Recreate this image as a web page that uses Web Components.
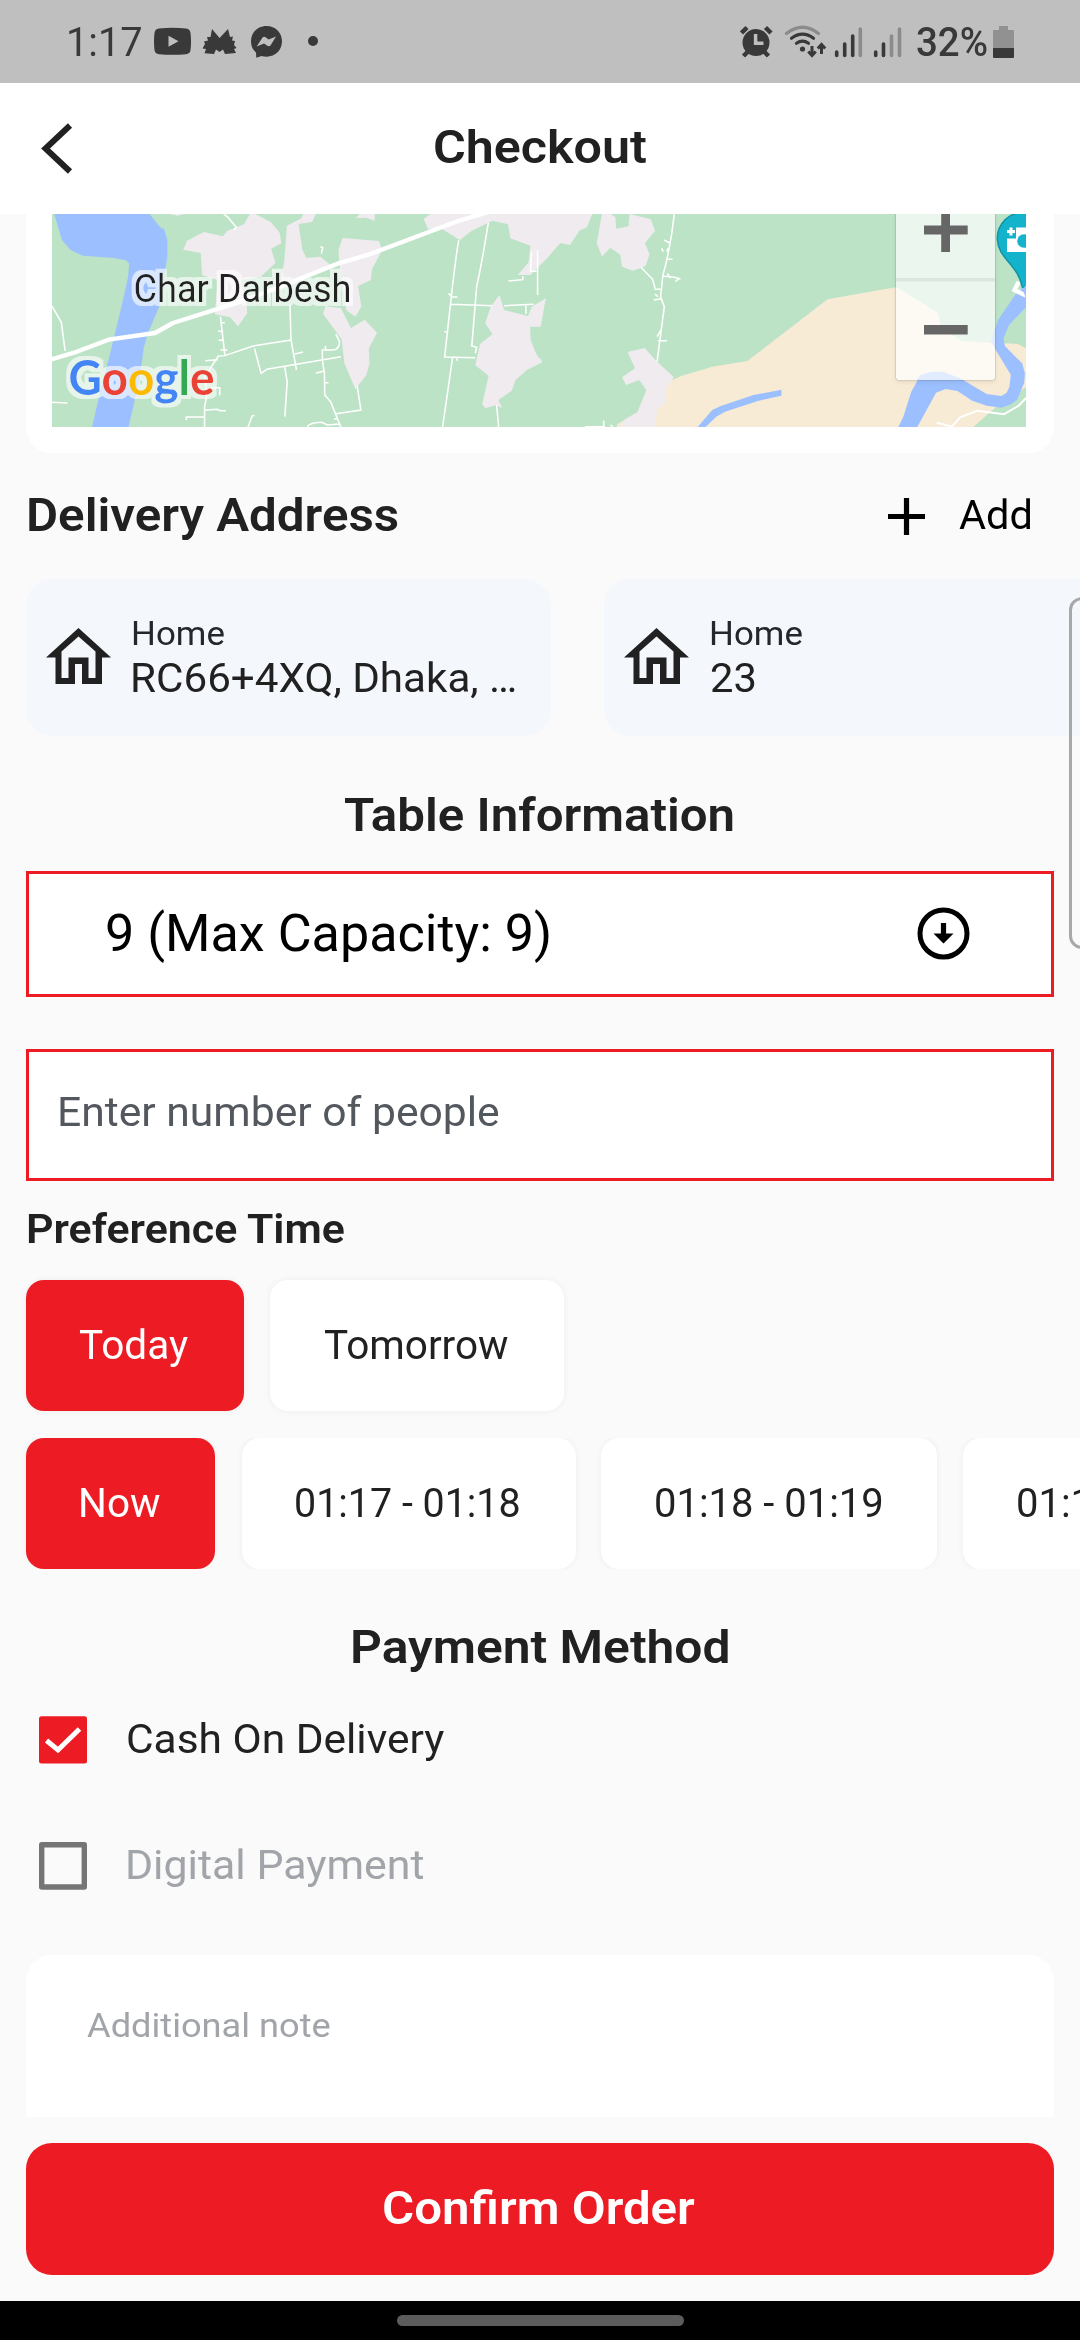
<!DOCTYPE html>
<html lang="en">
<head>
<meta charset="utf-8">
<title>Checkout</title>
<style>
html,body{margin:0;padding:0;background:#fafafa;overflow:hidden}
body{width:1080px;height:2340px;font-family:Roboto,"Liberation Sans",sans-serif;color:#212121}
</style>
</head>
<body>
<checkout-app></checkout-app>
<script>
const define = (name, html, setup) => {
  const t = document.createElement('template');
  t.innerHTML = html;
  customElements.define(name, class extends HTMLElement {
    connectedCallback() {
      if (this.shadowRoot) return;
      this.attachShadow({mode: 'open'}).appendChild(t.content.cloneNode(true));
      if (setup) setup(this, this.shadowRoot);
    }
  });
};

/* Single-line label whose ink fills exactly the width given in "w". */
const ctx = document.createElement('canvas').getContext('2d');
customElements.define('fit-label', class extends HTMLElement {
  connectedCallback() {
    if (this.shadowRoot) return;
    const size = this.getAttribute('size') || '40.5';
    const weight = this.getAttribute('weight') || '400';
    const root = this.attachShadow({mode: 'open'});
    const text = this.getAttribute('text');
    ctx.font = `${weight} ${size}px Roboto`;
    const m = ctx.measureText(text);
    const w = +this.getAttribute('w');
    const ink = m.actualBoundingBoxLeft + m.actualBoundingBoxRight;
    const k = w / ink;
    root.innerHTML = `<style>
      :host{display:block;flex:none;width:${w}px;height:${this.getAttribute('h') || 48}px;line-height:${this.getAttribute('h') || 48}px;white-space:pre;font-size:${size}px;font-weight:${weight}}
      span{display:inline-block;transform-origin:0 50%;transform:scaleX(${k});margin-left:${m.actualBoundingBoxLeft * k}px}
    </style><span></span>`;
    root.querySelector('span').textContent = text;
  }
});

define('status-bar', `<style>
  :host{display:flex;align-items:center;height:83px;background:#bfbfbf;color:#393939;box-sizing:border-box;padding:1px 66px 0 69px}
  svg{display:block;flex:none}
  .sp{flex:1}
</style>
<fit-label text="1:17" w="72" size="40.5"></fit-label>
<svg style="margin-left:13px" width="165" height="34" viewBox="154 25 165 34" fill="#393939">
  <path fill-rule="evenodd" d="M159 28.6Q172.500 27 186 28.600Q190 29 190.500 33Q191.600 41.500 190.500 50Q190 54 186 54.200Q172.500 55.500 159 54.200Q155 54 154.500 50Q153.500 41.500 154.500 33Q155 29 159 28.600ZM168.500 35.700V46.800L178.500 41.300Z"/>
  <path d="M212 29L219.600 38L228 29L230 37L233 36.600L232 40.500L235 41L234 45L236.600 48L234 49L236 53L225 54L223 49.500L219.600 52L216 49.500L214 54L204.500 53.300L206 49L202.500 48.500L205 44L204 41.500L208 40.500L207 37L210.500 37Z"/>
  <path fill-rule="evenodd" d="M266.500 26C257.500 26 251 32.600 251 41.300Q251 48.500 256 52.500L256.300 57.800L261.500 56Q264 56.700 266.500 56.700C275.600 56.700 282 50 282 41.300C282 32.600 275.600 26 266.500 26ZM256.700 46.500L262.500 37.500Q264 36 266 37.500L268.600 39.600L276 36.500L270.500 45.500Q269 47 267 45.600L264 43.500Z"/>
  <circle cx="313" cy="41" r="5"/>
</svg>
<span class="sp"></span>
<svg style="margin-right:11px" width="166" height="34" viewBox="740 25 166 34" fill="none" stroke="#393939">
  <circle cx="756" cy="42.500" r="13.500" fill="#393939" stroke="none"/>
  <path stroke-width="4.500" d="M741.500 33L747 27.500M771 33L765.500 27.500M743.500 56L748 51.500M768.500 56L764 51.500"/>
  <path stroke="#bfbfbf" stroke-width="3.500" d="M755.600 34V43.300H763.500"/>
  <g stroke-linecap="round" stroke-width="3.200">
    <path stroke="#8b8b8b" d="M786.500 33.500Q802.500 21 818.500 33.500"/>
    <path d="M791.500 38.200Q802.500 30 813.500 38.200M796.500 43.300Q802.500 39 808.500 43.300"/>
  </g>
  <circle cx="802.500" cy="49" r="2.600" fill="#393939" stroke="none"/>
  <path stroke-width="3" d="M812 46V55M808.300 51.500L812 55.500L815.700 51.500M821.500 54V45M817.800 48.500L821.500 44.500L825.200 48.500"/>
  <g stroke-width="3.600" stroke-linecap="round">
    <path d="M836.700 52V55.500M844.700 44V55.500M852.700 36V55.500M875.700 52V55.500M883.500 44V55.500"/>
    <path stroke="#8b8b8b" d="M860.300 29V55.500M891.500 36V55.500M899.500 29V55.500"/>
  </g>
</svg>
<fit-label text="32%" w="70" size="41" weight="500"></fit-label>
<svg style="margin-left:6px" width="21" height="34" viewBox="0 0 21 34"><path fill="#919191" d="M6 1H15V5H20Q21 5 21 6V24H0V6Q0 5 1 5H6Z"/><path fill="#393939" d="M0 23H21V32Q21 33 20 33H1Q0 33 0 32Z"/></svg>
`);

define('app-header', `<style>
  :host{display:flex;align-items:center;height:131px;background:#fff;box-sizing:border-box;padding-left:40px}
  svg{flex:none;margin-right:360px}
</style>
<svg width="34" height="56" viewBox="40 121 34 56"><path d="M70 125.500L45.500 148.500L70 171.500" fill="none" stroke="#212121" stroke-width="6"/></svg>
<slot></slot>`);

define('map-card', `<style>
  :host{display:block;height:239px;background:#fff;border-radius:0 0 26px 26px;box-sizing:border-box;padding:0 26px;margin:0 26px}
  svg{display:block}
</style>
<svg width="976" height="213" viewBox="52 214 976 213">
  <defs>
    <filter id="halo" x="-10%" y="-25%" width="120%" height="150%"><feMorphology in="SourceAlpha" operator="dilate" radius="3.500"/><feGaussianBlur stdDeviation=".7"/><feComponentTransfer result="a"><feFuncA type="linear" slope=".62"/></feComponentTransfer><feFlood flood-color="#fff"/><feComposite in2="a" operator="in" result="h"/><feMerge><feMergeNode in="h"/><feMergeNode in="SourceGraphic"/></feMerge></filter>
    <filter id="sh" x="-20%" y="-20%" width="140%" height="140%"><feDropShadow dx="0" dy="1.500" stdDeviation="2" flood-opacity=".4"/></filter>
    <clipPath id="mc"><path d="M52 214H1026V427H52Z"/></clipPath>
  </defs>
  <g clip-path="url(#mc)">
  <path fill="#bce3c6" d="M52 214H1026V427H52Z"/>
  <g transform="translate(0 200) scale(.34439 .33333)">
    <path fill="#9cc0ff" d="M157 40H433L465 82L477 88L486 120V170L462 320L430 400L418 440L405 540L373 682H267L290 580L320 460L355 310L372 230L375 190L365 181L330 174L240 167L205 150L180 120Z"/>
    <g fill="#efebef">
      <path d="M737 40L787 67L812 98L817 130L787 146L800 188L757 231L700 240L715 308L718 340L691 379L668 352L624 343L632 240L587 226L583 159L532 149L543 122L592 96L647 109L660 92L708 73L726 42Z"/>
      <path d="M880 42H917L906 66L867 72L878 150L890 174L930 170L958 193L880 240L815 250L826 180L833 77L875 55Z"/>
      <path d="M995 114L1100 123L1110 150L1080 208L1077 240L1040 258L1049 320L1032 350L1005 330L985 190L983 150Z"/>
      <path d="M945 318L990 325L1019 384L1059 359L1095 398L1071 445L1073 490L1064 525L1032 568L1000 490L992 418L938 342Z"/>
      <path d="M1033 54L1045 42H1088V62L1063 53Z"/>
      <path d="M1250 42H1720L1704 82L1682 92L1655 135L1627 129L1590 173L1540 225L1503 225L1535 187L1540 137L1482 115L1475 73L1430 62L1370 92L1335 120L1275 82L1243 88L1230 57Z"/>
      <path d="M1450 285L1464 330L1533 348L1544 320L1585 295L1570 380H1539L1541 420L1557 462L1574 487L1530 510L1497 540L1486 572L1447 600L1458 624L1441 615L1409 625L1400 612L1419 527L1380 496L1394 432L1430 403L1409 370L1425 320Z"/>
      <path d="M495 42H535L515 47Z"/>
    </g>
    <g fill="none" stroke="#fff" stroke-width="4.500">
      <path d="M650 42L662 52L686 82L680 90M151 318L178 367L189 453M151 607L196 609"/>
      <path d="M640 350L653 467L634 468L595 530L600 590L594 620V682M653 467L735 438L845 420L842 314M845 420L861 510M739 445L758 520L775 508L990 470M826 498L834 545L827 650M596 482L633 479M541 660V651H592M592 631L630 628L640 632H656M612 563H638V586M720 682L732 648L739 646"/>
      <path d="M642 368H653M633 394H648M635 421H648M640 450H660M856 462L880 456"/>
      <path d="M975 402L986 425Q985 450 965 450H936V480L942 520L943 585L960 605L990 682M917 520L940 513M945 548H954M975 641L1048 630L1037 558M892 680Q900 668 935 667L950 675L985 672M970 658L980 655M945 438V450"/>
      <path d="M1332 120Q1322 180 1308 313L1291 471L1380 473M1314 474L1285 682M1418 68Q1400 185 1384 260L1370 438L1384 442L1380 460M1308 313L1430 317M1464 317L1550 313M1302 280L1312 290L1328 291M1290 395H1302M1476 243L1518 239V229M1544 155L1540 214H1558M1561 150V285M1527 317V342M1442 615L1448 682M930 140L937 143L933 161M1325 474L1328 482"/>
    </g>
    <path fill="none" stroke="#fff" stroke-width="13" stroke-linejoin="round" d="M140 481L215 458L315 419L450 399L502 369L690 308L820 258L875 235L980 191L1070 164L1330 63L1420 36"/>
  </g>
  <g transform="translate(540 200) scale(.34439 .33333)">
    <path fill="#f7ebd6" d="M225 672L285 638L340 560L410 528L500 500L602 483L835 298L1040 260L1155 338L1165 385L1225 423L1388 432L1420 450V555L1320 625L1257 682H222Z"/>
    <g fill="#efebef">
      <path d="M180 40H203L219 52L221 86L257 79L260 42L322 58L334 92L305 130L318 163L307 198L270 212L238 200L233 164L204 143L180 170L165 130Z"/>
      <path d="M254 456L304 444L340 485L389 531L364 568L363 608L340 628L334 682H237L243 660L283 636L309 570L288 540L250 555L238 532L276 505Z"/>
      <path d="M0 312L17 295L2 350ZM0 472L6 485H0Z"/>
    </g>
    <g fill="#9cc0ff"><path d="M457 682L500 630L525 618L620 585L701 569V587L635 602L537 635L512 650L480 682Z"/>
    <path d="M1040 682L1055 650L1078 575L1105 525L1135 515H1170L1220 535L1297 582L1340 588L1355 578L1363 560L1367 524L1325 453L1310 425L1330 360L1383 280L1420 250V312L1362 375L1346 415L1350 438L1400 490L1408 520L1406 548L1385 600L1368 613L1340 623L1297 617L1255 602L1212 573L1178 567L1150 578L1095 682Z"/></g>
    <g fill="none" stroke="#fff" stroke-width="4.500">
      <path d="M390 42Q380 140 357 225L350 290L361 320L340 485M293 202L327 238L335 268H349M357 228L390 232L408 237M330 300L352 296M334 282L342 290M361 120L378 130M367 178H385M353 145L358 155M371 145L369 155M342 422H369M340 410L352 388M130 680H190M185 662V682M205 675L212 682M393 244L405 235M370 220L378 234"/>
      <path stroke-width="6" d="M1152 668L1196 680L1220 652L1270 632L1347 643L1390 617L1412 593"/>
      <path stroke-width="13" d="M1390 245L1378 270L1411 287"/>
    </g>
  </g>
  <text x="133.500" y="301.700" font-family="Roboto" font-size="38.500" textLength="218" lengthAdjust="spacingAndGlyphs" fill="#202124" filter="url(#halo)">Char Darbesh</text>
  <text x="68.500" y="395.300" font-family="Lato" font-weight="700" font-size="48" textLength="146" lengthAdjust="spacingAndGlyphs" filter="url(#halo)"><tspan fill="#4285f4">G</tspan><tspan fill="#ea4335">o</tspan><tspan fill="#fbbc04">o</tspan><tspan fill="#4285f4">g</tspan><tspan fill="#34a853">l</tspan><tspan fill="#ea4335">e</tspan></text>
  <g>
    <path fill="#000" opacity=".2" filter="url(#sh)" d="M895.500 210H995.500V377Q995.500 380.500 992 380.500H899Q895.500 380.500 895.500 377Z"/>
    <path fill="#bce3c6" d="M896 210H995V377Q995 380 992 380H899Q896 380 896 377Z"/>
    <g transform="translate(540 200) scale(.34439 .33333)"><path fill="#f7ebd6" d="M1034 261L1155 338L1165 385L1225 423L1321 429V533L1314 540H1041L1034 533Z"/><path fill="#9cc0ff" d="M1092 540L1105 525L1135 515H1170L1220 535L1230 540ZM1321 385L1310 425L1321 445Z"/></g>
    <path fill="#fff" opacity=".7" d="M896 210H995V377Q995 380 992 380H899Q896 380 896 377Z"/>
    <path fill="#dbe6de" d="M896 278H995V281.500H896Z"/>
    <path fill="#666" d="M924 225.500H941.200V210H950V225.500H967.700V234.500H950V252H941.200V234.500H924ZM924 325H967.700V334.500H924Z"/>
  </g>
  <path fill="#13b3cb" stroke="#1193a8" stroke-width="1.500" d="M1022.500 287.500C1018 264 998 259 997.300 239C997 224 1009 212 1025 212H1040V287Z"/>
  <path fill="#9cc0ff" d="M1022 289L1027 285V300Z"/>
  <path fill="#fff" d="M1016 227.500H1030V252H1007V238.500H1016ZM1009.500 227.500H1012.500V230H1015V233H1012.500V235.500H1009.500V233H1007V230H1009.500Z"/>
  <circle cx="1024" cy="241" r="6.800" fill="#13b3cb"/>
  </g>
</svg>`);

define('address-card', `<style>
  :host{display:flex;flex:none;width:525px;height:157px;border-radius:26px;background:#f4f7fc;box-sizing:border-box;padding:0 0 0 20px}
  svg{flex:none;margin:49px 22px 0 0}
  .t{padding-top:31px}
</style>
<svg width="65" height="57" viewBox="0 0 65 57" fill="#212121"><path fill-rule="evenodd" d="M32.500 0L65 29.500H56V56H36V36H29V56H9.500V29.500H0ZM32.500 8.500L15.500 23.500V50H22.500V29.500H42.500V50H49.500V23.500Z"/></svg>
<div class="t"><slot></slot></div>`);

define('slot-chip', `<style>
  :host{display:flex;flex:none;align-items:center;height:131px;box-sizing:border-box;border-radius:18px;background:#fff;box-shadow:0 0 6px rgba(0,0,0,.06);padding-bottom:2px}
  :host([selected]){background:#ed1c24;color:#fff}
</style><slot></slot>`, h => { h.style.width = h.getAttribute('w') + 'px'; h.style.paddingLeft = h.getAttribute('p') + 'px'; });

define('form-box', `<style>
  :host{display:flex;align-items:center;box-sizing:border-box;margin:0 26px;background:#fff;border:3px solid #ed1c24}
</style><slot></slot>`);

define('check-row', `<style>
  :host{display:flex;align-items:center;height:48px;padding-left:39px}
  svg{margin-right:41px;flex:none;display:block}
  .on{display:none}
  :host([checked]) .on{display:block}
  :host([checked]) .off{display:none}
</style>
<svg width="48" height="48" viewBox="0 0 48 48"><g class="on"><rect y=".3" width="48" height="47.200" rx="2.500" fill="#ed1c24"/><path d="M7.500 24.500L19 34L40.500 13" fill="none" stroke="#fff" stroke-width="5"/></g><rect class="off" x="2.700" y="2.700" width="42.600" height="42.300" fill="none" stroke="#757575" stroke-width="5.400" stroke-linejoin="round"/></svg>
<slot></slot>`);

define('note-box', `<style>
  :host{display:block;margin:0 26px;height:162px;background:#fff;border-radius:26px 26px 0 0;box-sizing:border-box;padding:47px 0 0 61px;color:#a1a4a9}
</style><slot></slot>`);

define('primary-button', `<style>
  :host{display:flex;justify-content:center;align-items:center;margin:0 26px;height:131.500px;border-radius:26px;background:#ed1c24;color:#fff;box-sizing:border-box;padding-bottom:1px}
</style><slot></slot>`);

define('nav-bar', `<style>
  :host{display:flex;justify-content:center;height:39px;background:#000;box-sizing:border-box;padding-top:14px}
  i{width:287px;height:11px;border-radius:6px;background:#5c5c5c}
</style><i></i>`);

define('edge-handle', `<style>
  :host{position:absolute;left:1069px;top:597px;width:30px;height:352px;box-sizing:border-box;border:3px solid #a8a8a8;border-radius:13px}
</style>`);

define('checkout-app', `<style>
  :host{display:flex;flex-direction:column;position:relative;width:1080px;height:2340px;overflow:hidden;background:#fafafa}
  :host>*{flex:none}
  .row{display:flex}
  .head{height:126px;align-items:center;box-sizing:border-box;padding:0 50px 2px 29px}
  .sp{flex:1}
  .cards{gap:53px;padding-left:26px}
  .center{display:flex;justify-content:center;align-items:center}
  .people{color:#53585e}
  .times{padding-left:26px;gap:26px}
  .dim{color:#a1a4a9}
  .slots{overflow:hidden}
</style>
<status-bar></status-bar>
<app-header><fit-label text="Checkout" w="211" size="46.5" weight="600" style="margin:-3px 0 0 1px"></fit-label></app-header>
<map-card></map-card>
<div class="row head"><fit-label text="Delivery Address" w="369" size="46.5" weight="600"></fit-label><span class="sp"></span>
  <svg width="37" height="37" viewBox="0 0 37 37" style="margin:3px 34px 0 0"><path d="M18.500 0V37M0 18.500H37" stroke="#000" stroke-width="5.200"/></svg>
  <fit-label text="Add" w="71" size="40.5" style="color:#000"></fit-label></div>
<div class="row cards">
  <address-card><fit-label text="Home" w="91" size="33.5" h="48" style="color:#25282b"></fit-label><fit-label text="RC66+4XQ, Dhaka, …" w="382" h="40"></fit-label></address-card>
  <address-card><fit-label text="Home" w="91" size="33.5" h="48" style="color:#25282b"></fit-label><fit-label text="23" w="44" h="40"></fit-label></address-card>
</div>
<div class="center" style="height:134.5px;padding:22px 3px 0 0;box-sizing:border-box"><fit-label text="Table Information" w="389" size="46.5" weight="600" style="margin-top:1px"></fit-label></div>
<form-box style="height:126px;padding-left:78px;color:#000"><fit-label text="9 (Max Capacity: 9)" w="442" size="52" h="60"></fit-label>
  <svg width="53" height="53" viewBox="-26.5 -26.5 53 53" style="margin-left:368px"><circle r="23.500" fill="none" stroke="#000" stroke-width="5"/><path d="M-2.600 -10.500H2.600V0H10L0 10L-10 0H-2.600Z"/></svg></form-box>
<form-box class="people" style="height:131.5px;margin-top:52.5px;padding-left:31px"><fit-label text="Enter number of people" w="438" style="margin-top:-5px"></fit-label></form-box>
<div class="row" style="height:99.5px;align-items:center;padding-left:28px"><fit-label text="Preference Time" w="317" weight="600" style="margin-top:-3px"></fit-label></div>
<div class="row times"><slot-chip selected w="218" p="53"><fit-label text="Today" w="109"></fit-label></slot-chip><slot-chip w="294" p="54"><fit-label text="Tomorrow" w="184"></fit-label></slot-chip></div>
<div class="row times slots" style="margin-top:27px"><slot-chip selected w="189" p="55"><fit-label text="Now" w="79"></fit-label></slot-chip><slot-chip w="334" p="54" style="margin-left:1px"><fit-label text="01:17 - 01:18" w="223"></fit-label></slot-chip><slot-chip w="336" p="55" style="margin-left:-1px"><fit-label text="01:18 - 01:19" w="226"></fit-label></slot-chip><slot-chip w="336" p="55"><fit-label text="01:19 - 01:20" w="226"></fit-label></slot-chip></div>
<div class="center" style="height:147px;padding:9px 0 0 1px;box-sizing:border-box"><fit-label text="Payment Method" w="375" size="46.5" weight="600"></fit-label></div>
<check-row checked><fit-label text="Cash On Delivery" w="316" style="margin-top:-3px"></fit-label></check-row>
<check-row style="margin-top:78px" class="dim"><fit-label text="Digital Payment" w="295" style="margin-top:-3px"></fit-label></check-row>
<note-box style="margin-top:65px"><fit-label text="Additional note" w="243" size="33.5"></fit-label></note-box>
<primary-button style="margin-top:26px"><fit-label text="Confirm Order" w="311" size="46.5" weight="600"></fit-label></primary-button>
<nav-bar style="margin-top:26.5px"></nav-bar>
<edge-handle></edge-handle>`);
</script>
</body>
</html>
